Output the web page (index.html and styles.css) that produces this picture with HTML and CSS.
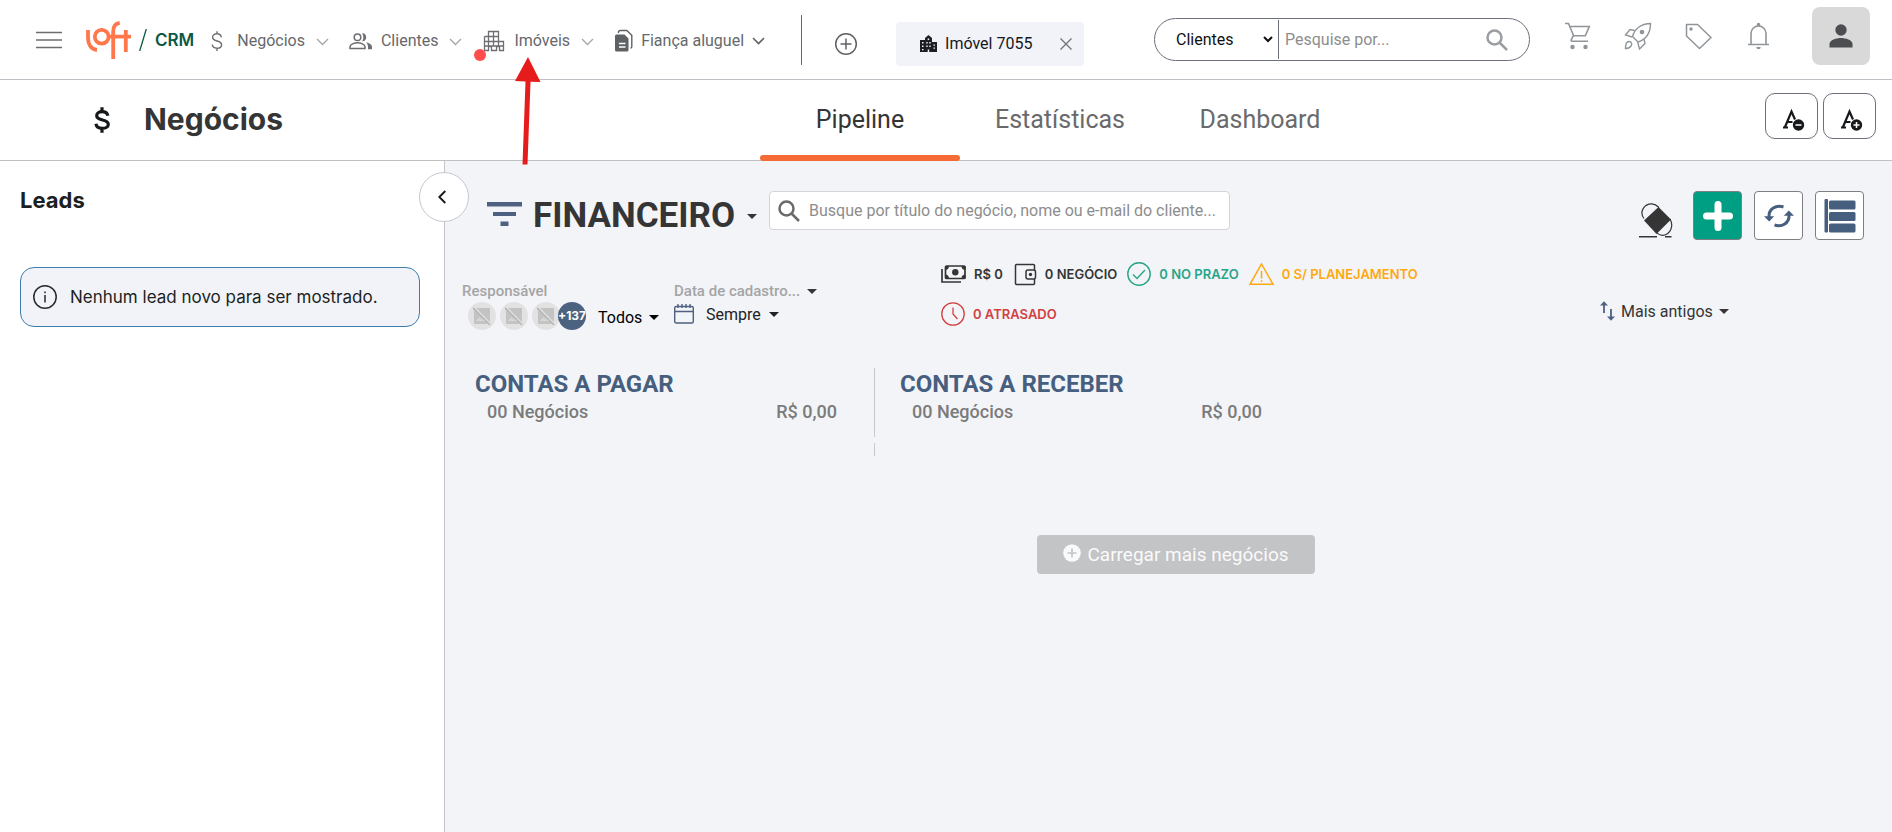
FILE: index.html
```
<!DOCTYPE html>
<html lang="pt-BR">
<head>
    <meta charset="UTF-8">
    <meta name="viewport" content="width=device-width, initial-scale=1.0">
    <title>Loft CRM - Negócios</title>
    <link rel="stylesheet" href="styles.css">
</head>
<body>
    <header class="topbar">
        <button class="menu-btn" aria-label="Menu">
            <svg width="26" height="18" viewBox="0 0 26 18" stroke="#6d6e71" stroke-width="1.6"><path d="M0 1.5h26M0 9h26M0 16.5h26"/></svg>
        </button>
        <a href="#" class="logo">
            <svg width="45" height="38" viewBox="0 0 45 38" fill="none" stroke="#ff774a" stroke-width="3.8" aria-label="Loft">
                <path d="M2 9v7c0 8 3.500 12.500 9 12.800M27.200 38V10.500c0-5 2-8 6.500-8.600M39.800 9v22M22 15.700h23"/>
                <circle cx="15.700" cy="15.700" r="6.900"/>
            </svg>
            <svg width="8" height="22" viewBox="0 0 8 22" stroke="#0d5844" stroke-width="1.3"><path d="M7.300 0L.7 22"/></svg>
            <span class="logo-text">CRM</span>
        </a>
        <nav class="main-nav">
            <button class="nav-item">
                <svg width="24" height="24" viewBox="0 0 24 24" fill="none" stroke="#6d6e71" stroke-width="1.4"><path d="M16.300 8.300C16 6 14.300 4.800 12 4.800c-2.600 0-4.400 1.300-4.400 3.400 0 5 9 2.600 9 7.500 0 2.200-1.900 3.500-4.600 3.500-2.700 0-4.500-1.400-4.700-3.700M12 2.300v2.500M12 19.200v2.700"/></svg>
                <span>Negócios</span>
                <svg class="chev" width="13" height="8" viewBox="0 0 13 8"><path d="M1 1l5.500 5.500L12 1"/></svg>
            </button>
            <button class="nav-item">
                <svg width="24" height="24" viewBox="0 0 24 24" fill="none" stroke="#6d6e71" stroke-width="1.5"><circle cx="8.500" cy="8.300" r="3.300"/><path d="M1 19.500v-1.700c0-2.600 4.500-4 7.500-4s7.500 1.400 7.500 4v1.700z"/><path d="M13.200 4.400c2.300-.3 4 1.500 4 3.900s-1.700 4.300-4 3.900c1.500-2.300 1.500-5.500 0-7.800z" fill="#6d6e71" stroke="none"/><path d="M17 13.300c3.500.8 6 2.300 6 4.500v2.500h-4v-2.500c0-1.800-.8-3.400-2-4.500z" fill="#6d6e71" stroke="none"/></svg>
                <span>Clientes</span>
                <svg class="chev" width="13" height="8" viewBox="0 0 13 8"><path d="M1 1l5.500 5.500L12 1"/></svg>
            </button>
            <button class="nav-item">
                <svg width="24" height="24" viewBox="0 0 24 24" fill="none" stroke="#6d6e71" stroke-width="1.300"><path d="M2.500 7.500h4v-5h10v5M6.500 7.500h10v5h5v9h-4v-4h-3v4h-5v-4h-3v4h-4v-14M2.500 12.500h14M2.500 17h19M6.500 7.500v14M11.500 2.500v15M16.500 12.500v5M9.500 17.500v4M14.500 17.500v4M2.500 21.500h4"/></svg>
                <span>Imóveis</span>
                <svg class="chev" width="13" height="8" viewBox="0 0 13 8"><path d="M1 1l5.500 5.500L12 1"/></svg>
                <i class="dot"></i>
            </button>
            <button class="nav-item dark">
                <svg width="19" height="24" viewBox="0 0 19 24"><path d="M2.500 5.500h8l4 4V21a1.500 1.500 0 0 1-1.500 1.500H2.500A1.500 1.500 0 0 1 1 21V7a1.500 1.500 0 0 1 1.500-1.500z" fill="#5f6265"/><path d="M5 14.500h6.500M5 18h6.500" stroke="#fff" stroke-width="1.400"/><path d="M4.500 4V3.200C4.500 2 5 1.500 6.200 1.500h6.600l5 4.800v11.500c0 .8-.6 1.200-1.400 1.200" fill="none" stroke="#5f6265" stroke-width="1.400"/></svg>
                <span>Fiança aluguel</span>
                <svg class="chev" width="13" height="8" viewBox="0 0 13 8"><path d="M1 1l5.500 5.500L12 1"/></svg>
            </button>
        </nav>
        <div class="divider"></div>
        <div class="open-tabs">
            <button aria-label="Nova aba">
                <svg width="24" height="24" viewBox="0 0 24 24" fill="none" stroke="#5f6265" stroke-width="1.500"><circle cx="12" cy="12" r="10.300"/><path d="M12 6.500v11M6.500 12h11"/></svg>
            </button>
            <div class="open-tab">
                <svg width="17" height="17" viewBox="0 0 17 17"><path d="M0 5h5V3l3.500-3L12 3v4h5v10H0z" fill="#1c1f23"/><path d="M2 7h1.500v1.500H2zM2 10.500h1.500V12H2zM7.700 3.500h1.500V5H7.700zM6.300 7h1.400v1.500H6.300zM9.300 7h1.400v1.500H9.300zM6.300 10.500h1.400V12H6.300zM9.300 10.500h1.400V12H9.300zM13.500 9.500H15v1.300h-1.500zM13.500 12.500H15v1.300h-1.500zM2 14h1.500v1.300H2zM7.700 14.500h1.500V17H7.700z" fill="#f2f3f8"/></svg>
                <a href="#">Imóvel 7055</a>
                <button class="close" aria-label="Fechar aba">
                    <svg width="12" height="12" viewBox="0 0 12 12" stroke="#73767a" stroke-width="1.400"><path d="M.5.500l11 11M11.500.500l-11 11"/></svg>
                </button>
            </div>
        </div>
        <form class="search-pill">
            <select aria-label="Buscar em">
                <option>Clientes</option>
            </select>
            <input type="text" placeholder="Pesquise por..." aria-label="Pesquisar">
            <button type="button" aria-label="Pesquisar">
                <svg width="24" height="24" viewBox="0 0 24 24" fill="none" stroke="#9a9ea2" stroke-width="2.500"><circle cx="9.500" cy="9.500" r="7"/><path d="M14.500 14.500l7.500 7.500"/></svg>
            </button>
        </form>
        <div class="shortcuts">
            <button aria-label="Carrinho">
                <svg width="28" height="28" viewBox="0 0 28 28" fill="none" stroke="#909599" stroke-width="1.600"><path d="M1 1.500h3.500l5 12-2.300 4.300c-.3.900 0 1.500 1 1.500H24M5.800 4.500h19.500l-4 9.300H9.700"/><circle cx="8.500" cy="25" r="2.200" fill="#909599" stroke="none"/><circle cx="21.500" cy="25" r="2.200" fill="#909599" stroke="none"/></svg>
            </button>
            <button aria-label="Novidades">
                <svg width="28" height="28" viewBox="0 0 28 28" fill="none" stroke="#909599" stroke-width="1.400"><path d="M8.500 14.500C10.500 7 17 1.500 26.500 1.500c0 9.500-5 16-12.500 18.500zM10.500 8.500L6 7.500l-4.500 5.500 6.500 2M20 17l1 4.500-5.500 5.500-1.800-6.800"/><path d="M1.500 26.500c0-5 1-7 3.500-7s3.500 2.500 2 4.500c-1 1.500-3 2.500-5.500 2.500z"/><circle cx="18" cy="10" r="2.300" fill="#909599" stroke="none"/></svg>
            </button>
            <button aria-label="Etiquetas">
                <svg width="28" height="28" viewBox="0 0 28 28" fill="none" stroke="#909599" stroke-width="1.500"><path d="M2.500 2.500h11L27 15.500 15.500 26.500l-13-12.500z" stroke-linejoin="round"/><circle cx="7" cy="7" r="1.700" fill="#909599" stroke="none"/></svg>
            </button>
            <button aria-label="Notificações">
                <svg width="28" height="28" viewBox="0 0 28 28" fill="none" stroke="#909599" stroke-width="1.600"><path d="M4 22.500h21M7 22v-10.500a7.500 7.500 0 0 1 15 0V22"/><path d="M12.800 4V2.500a1.700 1.700 0 0 1 3.400 0V4zM12.300 25h4.400a2.200 2.200 0 0 1-4.400 0z" fill="#909599" stroke="none"/></svg>
            </button>
            <button class="avatar" aria-label="Perfil">
                <svg width="24" height="24" viewBox="0 0 24 24" fill="#4c4d50"><circle cx="12" cy="6" r="5.700"/><path d="M.5 23.500V20c0-4 7-6 11.500-6s11.500 2 11.500 6v3.500z"/></svg>
            </button>
        </div>
    </header>

    <div class="page-bar">
        <svg class="page-icon" width="16" height="26" viewBox="0 0 16 26" fill="none" stroke="#16181b" stroke-width="3.200"><path d="M13.800 8.800C13.300 6 11.300 4.700 8.200 4.700 5 4.700 2.700 6.200 2.700 8.700c0 5.800 11.600 2.700 11.600 8.500 0 2.600-2.500 4.200-6 4.200-3.600 0-5.900-1.600-6.400-4.600M8 .3v4.400M8 21.400v4.400"/></svg>
        <h1>Negócios</h1>
        <nav class="page-tabs">
            <a href="#" class="active">Pipeline</a>
            <a href="#">Estatísticas</a>
            <a href="#">Dashboard</a>
        </nav>
        <div class="font-size">
            <button aria-label="Diminuir fonte">
                <svg width="24" height="24" viewBox="0 0 24 24"><path d="M1 19.500h5M3 19L9.500 3.500l3.500 8M5.500 14h5" fill="none" stroke="#16181b" stroke-width="2.200"/><circle cx="16.500" cy="17" r="5.700" fill="#16181b"/><path d="M13.500 17h6" stroke="#fff" stroke-width="1.500"/></svg>
            </button>
            <button aria-label="Aumentar fonte">
                <svg width="24" height="24" viewBox="0 0 24 24"><path d="M1 19.500h5M3 19L9.500 3.500l3.500 8M5.500 14h5" fill="none" stroke="#16181b" stroke-width="2.200"/><circle cx="16.500" cy="17" r="5.700" fill="#16181b"/><path d="M13.500 17h6M16.500 14v6" stroke="#fff" stroke-width="1.500"/></svg>
            </button>
        </div>
    </div>

    <div class="content">
        <aside class="leads">
            <h2>Leads</h2>
            <button class="collapse" aria-label="Recolher">
                <svg width="8" height="14" viewBox="0 0 8 14" fill="none" stroke="#16181b" stroke-width="1.900"><path d="M7.300 1L1.300 7l6 6"/></svg>
            </button>
            <div class="notice">
                <svg width="24" height="24" viewBox="0 0 24 24" fill="none" stroke="#26292e" stroke-width="1.500"><circle cx="12" cy="12" r="11.200"/><path d="M12 10v7.500M12 6.500v1.800"/></svg>
                <p>Nenhum lead novo para ser mostrado.</p>
            </div>
        </aside>

        <main class="pipeline">
            <div class="toolbar">
                <button class="filter-btn" aria-label="Filtros">
                    <svg width="35" height="24" viewBox="0 0 35 24" fill="#4f6080"><path d="M0 0h35v4.500H0zM6 10h23v4H6zM13.500 19.500h8V24h-8z"/></svg>
                </button>
                <button class="pipeline-name">FINANCEIRO <i class="caret"></i></button>
                <div class="deal-search">
                    <svg width="24" height="24" viewBox="0 0 24 24" fill="none" stroke="#6a6a6a" stroke-width="2.500"><circle cx="9.500" cy="9.500" r="7"/><path d="M14.500 14.500l7.500 7.500"/></svg>
                    <input type="text" placeholder="Busque por título do negócio, nome ou e-mail do cliente..." aria-label="Buscar negócio">
                </div>
                <div class="actions">
                    <button class="eraser" aria-label="Limpar filtros">
                        <svg width="34" height="35" viewBox="0 0 34 35" fill="none" stroke="#353535"><path d="M5 15.500C0 9 5 .5 13 .8c3 .2 5 1.700 7 3.700M31 16c4 7 .5 15.500-7 16.300-3 .1-5.500-1.500-7-3.800" stroke-width="1.200"/><path d="M19.500 4L32 16.500 17.500 31 5 17.500z" fill="#353535" stroke="none"/><path d="M0 33.800h18M26 33.800h6.500" stroke-width="1.600"/></svg>
                    </button>
                    <button class="action add" aria-label="Novo negócio">
                        <svg width="32" height="32" viewBox="0 0 32 32" stroke="#fff" stroke-width="7" stroke-linecap="round"><path d="M16 4.500v23M4.500 16h23"/></svg>
                    </button>
                    <button class="action" aria-label="Atualizar">
                        <svg width="30" height="24" viewBox="0 0 30 24"><path d="M5 13C4.500 5 12 .5 19.500 3M25 11c.500 8-7 12.500-14.500 10" fill="none" stroke="#475f7f" stroke-width="3"/><path d="M0 12.200h10.200L5.200 17.500zM30 11.800H19.800L24.800 6.500z" fill="#475f7f"/></svg>
                    </button>
                    <button class="action" aria-label="Visualização em lista">
                        <svg width="32" height="34" viewBox="0 0 32 34" fill="#475f7f"><rect x="0.500" width="3.500" height="33.500" rx="1"/><rect x="5" y="1.500" width="26.500" height="9" rx="1.500"/><rect x="5" y="13" width="26.500" height="9" rx="1.500"/><rect x="5" y="24.500" width="26.500" height="9" rx="1.500"/></svg>
                    </button>
                </div>
            </div>

            <div class="filters">
                <div class="filter">
                    <span class="filter-label">Responsável</span>
                    <div class="owners">
                        <span class="owner"><svg width="18" height="18" viewBox="0 0 18 18"><path d="M1 1h16v16H1z" fill="#c3c3c3"/><path d="M3 14l3.500-4 2.500 2.500 2-1.500 3 3z" fill="#d6d6d6"/><path d="M0 0l18 18" stroke="#e0e0e0" stroke-width="3"/><path d="M-1 0l18 18" stroke="#b0b0b0" stroke-width="1.300"/></svg></span>
                        <span class="owner"><svg width="18" height="18" viewBox="0 0 18 18"><path d="M1 1h16v16H1z" fill="#c3c3c3"/><path d="M3 14l3.500-4 2.500 2.500 2-1.500 3 3z" fill="#d6d6d6"/><path d="M0 0l18 18" stroke="#e0e0e0" stroke-width="3"/><path d="M-1 0l18 18" stroke="#b0b0b0" stroke-width="1.300"/></svg></span>
                        <span class="owner"><svg width="18" height="18" viewBox="0 0 18 18"><path d="M1 1h16v16H1z" fill="#c3c3c3"/><path d="M3 14l3.500-4 2.500 2.500 2-1.500 3 3z" fill="#d6d6d6"/><path d="M0 0l18 18" stroke="#e0e0e0" stroke-width="3"/><path d="M-1 0l18 18" stroke="#b0b0b0" stroke-width="1.300"/></svg></span>
                        <span class="owner more">+137</span>
                        <button class="owner-pick">Todos <i class="caret"></i></button>
                    </div>
                </div>
                <div class="filter">
                    <button class="filter-label">Data de cadastro... <i class="caret"></i></button>
                    <button class="date-pick">
                        <svg width="20" height="20" viewBox="0 0 20 20" fill="none" stroke="#4f6080" stroke-width="1.400"><rect x="0.700" y="2.500" width="18.600" height="16.500" rx="1.500"/><path d="M.7 7.500h18.600M4 0v4M8 0v4M12 0v4M16 0v4"/></svg>
                        <span>Sempre</span>
                        <i class="caret"></i>
                    </button>
                </div>
                <div class="stats">
                    <span class="stat">
                        <svg width="25" height="24" viewBox="0 0 25 24" fill="none" stroke="#353535" stroke-width="1.700"><rect x="4.500" y="4" width="19.500" height="12.500" rx="1"/><path d="M1 7v13h19" /><circle cx="14.300" cy="10.200" r="3.200" fill="#353535" stroke="none"/><path d="M4 4h4c0 2.500-1.500 4-4 4zM24.500 4h-4c0 2.500 1.500 4 4 4zM4 16.500h4c0-2.500-1.500-4-4-4zM24.500 16.500h-4c0-2.500 1.500-4 4-4z" fill="#353535" stroke="none"/></svg>
                        R$ 0
                    </span>
                    <span class="stat">
                        <svg width="24" height="24" viewBox="0 0 24 24" fill="none" stroke="#353535" stroke-width="1.500"><path d="M21.500 8V3.500a1 1 0 0 0-1-1h-17a1 1 0 0 0-1 1v18a1 1 0 0 0 1 1h17a1 1 0 0 0 1-1V17"/><rect x="13" y="8" width="9.500" height="9" rx="2"/><circle cx="17.500" cy="12.500" r="1.700" fill="#353535" stroke="none"/></svg>
                        0 NEGÓCIO
                    </span>
                    <span class="stat ok">
                        <svg width="24" height="24" viewBox="0 0 24 24" fill="none" stroke="#28a588" stroke-width="1.400"><circle cx="12" cy="12" r="11.200"/><path d="M6 12.500l4 4 8-8.500"/></svg>
                        0 NO PRAZO
                    </span>
                    <span class="stat warn">
                        <svg width="25" height="24" viewBox="0 0 25 24" fill="none" stroke="#ffa90f" stroke-width="1.500"><path d="M12.500 2L24 22.300H1z"/><path d="M12.500 9v7.500M12.500 18.300v1.700"/></svg>
                        0 S/ PLANEJAMENTO
                    </span>
                    <span class="stat late">
                        <svg width="24" height="24" viewBox="0 0 24 24" fill="none" stroke="#d2413f" stroke-width="1.300"><circle cx="12" cy="12" r="11.200"/><path d="M12 5.500V12l4.500 5"/></svg>
                        0 ATRASADO
                    </span>
                </div>
                <button class="sort">
                    <svg width="15" height="20" viewBox="0 0 15 20" fill="none" stroke="#4f6080" stroke-width="1.800"><path d="M4 2v10M11 8v10"/><path d="M0 4.500h8L4 .3zM7 15.500h8l-4 4.200z" fill="#4f6080" stroke="none"/></svg>
                    <span>Mais antigos</span>
                    <i class="caret"></i>
                </button>
            </div>

            <div class="board">
                <section class="stage">
                    <h3>CONTAS A PAGAR</h3>
                    <div class="stage-info"><span>00 Negócios</span><span>R$ 0,00</span></div>
                </section>
                <section class="stage">
                    <h3>CONTAS A RECEBER</h3>
                    <div class="stage-info"><span>00 Negócios</span><span>R$ 0,00</span></div>
                </section>
            </div>
            <div class="board-body">
                <div class="stage-cards"></div>
                <div class="stage-cards"></div>
            </div>

            <div class="load-more">
                <button>
                    <svg width="18" height="18" viewBox="0 0 18 18"><circle cx="9" cy="9" r="8.800" fill="#fafafb"/><path d="M9 4.500v9M4.500 9h9" stroke="#c3c4c6" stroke-width="1.700"/></svg>
                    Carregar mais negócios
                </button>
            </div>
        </main>
    </div>

    <!-- arrow pointing at the Imóveis menu -->
    <svg class="pointer" width="26" height="108" viewBox="0 0 26 108" fill="#e61c1c"><path d="M13 0L25.500 25l-10-.3L12.500 107.500h-5L10.500 24.500 0 24z"/></svg>
</body>
</html>
```
FILE: styles.css
```
* {
    box-sizing: border-box;
}
body {
    margin: 0;
    min-height: 100vh;
    display: flex;
    flex-direction: column;
    background: #fff;
    color: #353535;
    font-family: Roboto, Arial, sans-serif;
    font-size: 16px;
    line-height: 20px;
}
button {
    background: none;
    border: none;
    padding: 0;
    font: inherit;
    color: inherit;
    cursor: pointer;
}
svg {
    display: block;
    flex: none;
}
a {
    color: inherit;
    text-decoration: none;
}
h1, h2, h3, p { margin: 0; }
.caret {
    display: inline-block;
    border: 5px solid transparent;
    border-top-color: currentColor;
    border-bottom: 0;
}

/* top bar */
.topbar {
    display: flex;
    align-items: center;
    height: 80px;
    padding: 0 22px 0 36px;
    border-bottom: 1px solid #bfc0c5;
}
.logo {
    display: flex;
    align-items: center;
    gap: 8px;
    margin-left: 24px;
}
.logo-text {
    font-family: Inter, sans-serif;
    font-size: 17px;
    font-weight: 600;
    color: #0d5844;
}
.main-nav {
    display: flex;
    gap: 20px;
    margin-left: 11px;
    padding-top: 2px;
}
.nav-item {
    position: relative;
    display: flex;
    align-items: center;
    gap: 8px;
    color: #66686c;
    white-space: nowrap;
}
.chev {
    margin: 2px 0 0 3px;
    fill: none;
    stroke: #a5a6a8;
    stroke-width: 1.3;
}
.dark .chev {
    margin: 0;
    stroke: #5f6265;
    stroke-width: 1.6;
}
.dot {
    position: absolute;
    left: -8px;
    top: 20px;
    width: 12px;
    height: 12px;
    border-radius: 50%;
    background: #ff4d4d;
}
.divider {
    width: 1px;
    height: 50px;
    margin: 0 32px 0 36px;
    background: #66686c;
}
.open-tabs {
    display: flex;
    align-items: center;
    gap: 38px;
    padding-top: 8px;
}
.open-tab {
    display: flex;
    align-items: center;
    gap: 8px;
    height: 44px;
    padding: 0 12px 0 24px;
    border-radius: 4px;
    background: #f2f3f8;
    color: #16181b;
    white-space: nowrap;
}
.close { margin-left: 20px; }
.search-pill {
    display: flex;
    align-items: center;
    width: 376px;
    height: 43px;
    margin-left: auto;
    padding: 0 20px 0 17px;
    border: 1px solid #6b6f7c;
    border-radius: 22px;
}
.search-pill select {
    width: 104px;
    border: none;
    background: none;
    font: inherit;
    color: #111;
}
.search-pill input {
    flex: 1;
    min-width: 0;
    height: 39px;
    margin-left: 2px;
    padding: 0 6px;
    border: none;
    border-left: 1px solid #6b6f7c;
    outline: none;
    background: none;
    font: inherit;
}
input::placeholder { color: #8d8d8d; }
.shortcuts {
    display: flex;
    align-items: center;
    gap: 32px;
    margin-left: 34px;
    padding-bottom: 8px;
}
.avatar {
    display: flex;
    align-items: center;
    justify-content: center;
    width: 58px;
    height: 58px;
    margin-left: 8px;
    border-radius: 8px;
    background: #d9d9d9;
}

/* page title and tabs */
.page-bar {
    display: flex;
    align-items: center;
    height: 81px;
    padding: 0 16px 0 94px;
    border-bottom: 1px solid #bfc0bf;
}
.page-bar h1 {
    width: 616px;
    margin-left: 34px;
    padding-bottom: 2px;
    font-family: Inter, sans-serif;
    font-size: 30px;
    line-height: 40px;
    font-weight: 700;
}
.page-tabs {
    display: flex;
    align-self: stretch;
}
.page-tabs a {
    position: relative;
    width: 200px;
    text-align: center;
    font-size: 25px;
    line-height: 80px;
    color: #6a6a6c;
}
.page-tabs .active { color: #353535; }
.page-tabs .active::after {
    content: "";
    position: absolute;
    left: 0;
    right: 0;
    bottom: -1px;
    height: 6px;
    border-radius: 3px;
    background: #f66a36;
}
.font-size {
    display: flex;
    gap: 5px;
    margin-left: auto;
    padding-bottom: 8px;
}
.font-size button {
    display: flex;
    align-items: center;
    justify-content: center;
    width: 53px;
    height: 46px;
    padding-top: 8px;
    padding-left: 4px;
    border: 1px solid #6b6f7c;
    border-radius: 10px;
}

.content {
    flex: 1;
    display: flex;
}

/* leads sidebar */
.leads {
    position: relative;
    width: 445px;
    padding: 23px 24px 24px 20px;
    border-right: 1px solid #c4c5c9;
    font-family: Inter, sans-serif;
    color: #1c1f23;
}
.leads h2 {
    font-size: 22px;
    line-height: 32px;
    font-weight: 700;
}
.collapse {
    position: absolute;
    top: 11px;
    right: -25px;
    display: flex;
    align-items: center;
    justify-content: center;
    width: 50px;
    height: 50px;
    padding-right: 4px;
    border: 1px solid #c4c7d0;
    border-radius: 50%;
    background: #fff;
}
.notice {
    display: flex;
    align-items: center;
    gap: 13px;
    height: 60px;
    margin-top: 51px;
    padding: 0 12px;
    border: 1px solid #3b7dab;
    border-radius: 14px;
    background: #f2f3f8;
    font-size: 17px;
}

/* pipeline */
.pipeline {
    flex: 1;
    min-width: 0;
    background: #f2f4f8;
}
.toolbar {
    display: flex;
    align-items: flex-start;
    padding: 30px 28px 0 42px;
}
.filter-btn { padding-top: 11px; }
.pipeline-name {
    display: flex;
    align-items: center;
    gap: 12px;
    margin: 4px 12px 0 11px;
    font-size: 35px;
    line-height: 42px;
    font-weight: 700;
}
.deal-search {
    display: flex;
    align-items: center;
    gap: 8px;
    width: 461px;
    height: 39px;
    padding: 0 7px;
    border: 1px solid #d3d4d7;
    border-radius: 4px;
    background: #fff;
}
.deal-search input {
    flex: 1;
    min-width: 0;
    padding: 0;
    border: none;
    outline: none;
    font: inherit;
}
.actions {
    display: flex;
    gap: 12px;
    margin-left: auto;
}
.eraser {
    padding-top: 10px;
    margin-right: 8px;
}
.action {
    display: flex;
    align-items: center;
    justify-content: center;
    width: 49px;
    height: 49px;
    border: 1px solid #7d7f83;
    border-radius: 4px;
    background: #fff;
}
.add { background: #009e83; }

.filters {
    display: grid;
    grid-template-columns: 212px 267px minmax(0, 1fr) 292px;
    align-items: start;
    margin-top: 22px;
    padding-left: 17px;
    height: 87px;
}
.filter {
    display: flex;
    flex-direction: column;
    align-items: flex-start;
    padding-top: 19px;
}
.filter-label {
    display: flex;
    align-items: center;
    gap: 7px;
    font-size: 15px;
    font-weight: 500;
    color: #a5a4a5;
}
.filter-label .caret { color: #353535; }
.owners {
    display: flex;
    align-items: center;
    gap: 4px;
    padding: 1px 0 0 6px;
}
.owner {
    display: flex;
    align-items: center;
    justify-content: center;
    width: 28px;
    height: 28px;
    border-radius: 50%;
    background: #e2e2e2;
}
.more {
    margin-left: -6px;
    overflow: hidden;
    background: #4c6380;
    color: #fff;
    font-family: Inter, sans-serif;
    font-size: 12px;
    font-weight: 700;
}
.owner-pick {
    display: flex;
    align-items: center;
    gap: 7px;
    margin: 3px 0 0 8px;
    color: #000;
}
.date-pick {
    display: flex;
    align-items: center;
    gap: 8px;
    padding-top: 2px;
    color: #222;
}
.date-pick span { padding: 2px 0 0 4px; }
.stats {
    display: flex;
    flex-wrap: wrap;
    gap: 16px 10px;
    max-width: 500px;
}
.stat {
    display: flex;
    align-items: center;
    gap: 8px;
    height: 24px;
    font-family: Inter, sans-serif;
    font-size: 13px;
    font-weight: 600;
    white-space: nowrap;
}
.ok { color: #28a588; }
.warn { color: #ffa90f; }
.late { color: #d2413f; }
.sort {
    display: flex;
    align-items: center;
    gap: 6px;
    padding-top: 38px;
}
.sort span { padding-top: 2px; }

.board,
.board-body {
    display: flex;
    padding-left: 5px;
}
.board { margin-top: 19px; }
.board-body {
    height: 13px;
    margin-top: 6px;
}
.stage,
.stage-cards {
    width: 425px;
    border-right: 1px solid #c9c9c9;
}
.stage:last-child,
.stage-cards:last-child {
    border-right-color: transparent;
}
.stage {
    height: 69px;
    padding: 0 37px 0 25px;
}
.stage h3 {
    font-size: 24px;
    line-height: 32px;
    font-weight: 700;
    color: #475f7f;
}
.stage-info {
    display: flex;
    justify-content: space-between;
    padding-left: 12px;
    font-size: 18px;
    line-height: 24px;
    font-weight: 500;
    color: #7b7b7b;
}
.load-more {
    display: flex;
    justify-content: center;
    padding: 79px 0 0 15px;
}
.load-more button {
    display: flex;
    align-items: center;
    gap: 6px;
    height: 39px;
    padding: 0 26px;
    border-radius: 4px;
    background: #c3c4c6;
    color: #fafafb;
    font-size: 19px;
}
.load-more svg { margin-bottom: 3px; }

.pointer {
    position: absolute;
    left: 515px;
    top: 57px;
}
```
